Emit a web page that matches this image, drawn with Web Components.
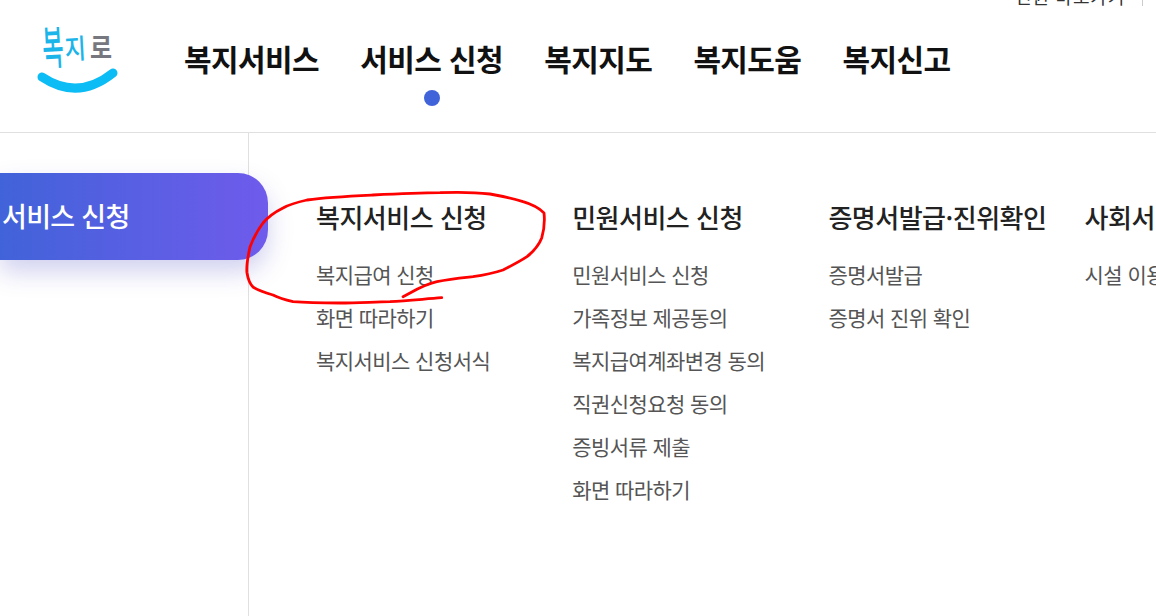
<!DOCTYPE html>
<html lang="ko">
<head>
<meta charset="utf-8">
<title>복지로</title>
<style>
  html, body { margin: 0; height: 100%; overflow: hidden; background: #fff; }
  body { font-family: "Noto Sans CJK KR", "Noto Sans", sans-serif; }
</style>
</head>
<body>
<site-top></site-top>
<site-header></site-header>
<menu-panel>
  <menu-column title="복지서비스 신청">
    <menu-link>복지급여 신청</menu-link>
    <menu-link>화면 따라하기</menu-link>
    <menu-link>복지서비스 신청서식</menu-link>
  </menu-column>
  <menu-column title="민원서비스 신청">
    <menu-link>민원서비스 신청</menu-link>
    <menu-link>가족정보 제공동의</menu-link>
    <menu-link>복지급여계좌변경 동의</menu-link>
    <menu-link>직권신청요청 동의</menu-link>
    <menu-link>증빙서류 제출</menu-link>
    <menu-link>화면 따라하기</menu-link>
  </menu-column>
  <menu-column title="증명서발급·진위확인">
    <menu-link>증명서발급</menu-link>
    <menu-link>증명서 진위 확인</menu-link>
  </menu-column>
  <menu-column title="사회서비스 이용">
    <menu-link>시설 이용 신청</menu-link>
  </menu-column>
</menu-panel>
<pen-mark></pen-mark>

<script>
class SiteTop extends HTMLElement {
  constructor() {
    super();
    this.attachShadow({ mode: 'open' });
    this.shadowRoot.innerHTML = `
      <style>
        :host { display: flex; justify-content: flex-end; height: 6px; overflow: hidden; }
        .util { display: flex; align-items: flex-end; height: 6px; padding-right: 13px; }
        span { font-size: 18px; letter-spacing: .8px; line-height: 20px; color: #333; white-space: nowrap; padding-right: 17px; border-right: 1px solid #ccc; height: 6px; display: flex; align-items: flex-end; }
      </style>
      <div class="util"><span>민원 바로가기</span></div>`;
  }
}

class SiteHeader extends HTMLElement {
  constructor() {
    super();
    this.attachShadow({ mode: 'open' });
    this.shadowRoot.innerHTML = `
      <style>
        :host { display: flex; align-items: flex-start; height: 126px; border-bottom: 1px solid #e0e0e0; }
        .logo { width: 184px; flex: none; position: relative; height: 126px; }
        .logo b { position: absolute; white-space: nowrap; line-height: 1; transform-origin: 0 0; }
        .bok { left: 41px; top: 17px; font-size: 23px; font-weight: 500; color: #1cb5ea; transform: rotate(-3deg) scaleY(2); }
        .ji { left: 64px; top: 28px; font-size: 23px; font-weight: 500; color: #1cb5ea; transform: rotate(-3deg) scaleY(1.2); }
        .ro { left: 90px; top: 27px; font-size: 24px; font-weight: 700; color: #77777f; transform: scaleY(1.15); }
        .logo svg { position: absolute; left: 0; top: 0; }
        nav { display: flex; gap: 41.2px; padding-top: 30px; }
        a { position: relative; font-size: 30px; line-height: 44px; font-weight: 700; letter-spacing: -.6px; color: #111; white-space: nowrap; }
        a.on::after { content: ''; position: absolute; left: 50%; top: 54px; width: 16px; height: 16px; margin-left: -8px; border-radius: 50%; background: #4163d9; }
      </style>
      <div class="logo">
        <b class="bok">복</b><b class="ji">지</b><b class="ro">로</b>
        <svg width="184" height="126" viewBox="0 0 184 126" aria-hidden="true">
          <path d="M42 71 Q78 95 113 67" fill="none" stroke="#0cbcf4" stroke-width="9" stroke-linecap="round"/>
        </svg>
      </div>
      <nav>
        <a>복지서비스</a>
        <a class="on">서비스 신청</a>
        <a>복지지도</a>
        <a>복지도움</a>
        <a>복지신고</a>
      </nav>`;
  }
}

class MenuPanel extends HTMLElement {
  constructor() {
    super();
    this.attachShadow({ mode: 'open' });
    this.shadowRoot.innerHTML = `
      <style>
        :host { display: flex; height: 483px; }
        aside { flex: none; width: 248px; border-right: 1px solid #e0e0e0; padding-top: 40px; }
        .current {
          width: 266px; height: 87px; padding-left: 2px; display: flex; align-items: center;
          border-radius: 0 30px 30px 0;
          background: linear-gradient(90deg, #4163d9, #6f5bec);
          box-shadow: 0 12px 24px rgba(90, 90, 200, .28);
          color: #fff; font-size: 27px; font-weight: 500; letter-spacing: -.7px; white-space: nowrap;
          position: relative;
        }
        .current span { margin-top: -2px; }
        .cols { display: flex; padding-left: 67px; padding-top: 64px; white-space: nowrap; }
      </style>
      <aside><div class="current"><span>서비스 신청</span></div></aside>
      <div class="cols"><slot></slot></div>`;
  }
}

class MenuColumn extends HTMLElement {
  constructor() {
    super();
    this.attachShadow({ mode: 'open' });
    this.shadowRoot.innerHTML = `
      <style>
        :host { display: block; flex: none; width: 256.2px; }
        h3 { margin: 0 0 16px; font-size: 26px; line-height: 40px; font-weight: 500; letter-spacing: -.5px; color: #222; }
        .list { display: flex; flex-direction: column; }
      </style>
      <h3></h3>
      <div class="list"><slot></slot></div>`;
    this.shadowRoot.querySelector('h3').textContent = this.getAttribute('title');
  }
}

class MenuLink extends HTMLElement {
  constructor() {
    super();
    this.attachShadow({ mode: 'open' });
    this.shadowRoot.innerHTML = `
      <style>
        :host { display: block; font-size: 21px; line-height: 43px; letter-spacing: -.56px; color: #555; white-space: nowrap; }
      </style>
      <slot></slot>`;
  }
}

// red pen annotation drawn over the page
class PenMark extends HTMLElement {
  constructor() {
    super();
    this.attachShadow({ mode: 'open' });
    this.shadowRoot.innerHTML = `
      <style>
        :host { position: absolute; left: 0; top: 0; pointer-events: none; }
        svg { display: block; }
      </style>
      <svg width="1156" height="616" viewBox="0 0 1156 616" aria-hidden="true">
        <path d="M403 296.7 C414 291 425 284 437 281.7 C450 279 461 278 473 276.7 C485 275 494 273 503 270 C511 266 519 262 527 256.7 C534 251 539 245 541.7 238 C544 230 545 222 544 213 C538 207 531 204 523 201.7 C512 198 501 196 490 194 C473 192 457 192 440 192.7 C418 193 395 194 373 195 C351 196 328 197 307 200 C298 202 290 204 283 208 C275 212 268 217 263 223 C257 231 253 239 250 247 C248 256 246 265 247 273 C248 279 250 284 253 287 C259 291 266 293 273 295 C279 298 286 300 293 301.7 C309 303 324 303 340 303 C357 303 373 302 390 301.7 C407 301 424 299 441.7 297.7"
          fill="none" stroke="#f00" stroke-width="2.8" stroke-linecap="round" stroke-linejoin="round"/>
      </svg>`;
  }
}

customElements.define('site-top', SiteTop);
customElements.define('site-header', SiteHeader);
customElements.define('menu-panel', MenuPanel);
customElements.define('menu-column', MenuColumn);
customElements.define('menu-link', MenuLink);
customElements.define('pen-mark', PenMark);
</script>
</body>
</html>
